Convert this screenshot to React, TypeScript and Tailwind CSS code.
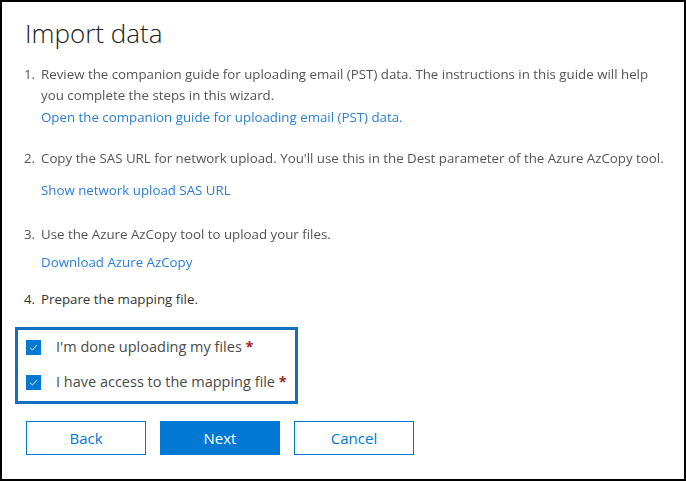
import React from 'react';

const font = { fontFamily: '"Open Sans", "Noto Sans", sans-serif' };

function Check() {
  return (
    <span className="flex h-[15px] w-[15px] shrink-0 items-center justify-center bg-[#0078d4]">
      <svg width="11" height="11" viewBox="0 0 11 11" fill="none">
        <polyline points="2,5.8 4.4,8 9,3" stroke="#fff" strokeWidth="0.9" />
      </svg>
    </span>
  );
}

export default function App() {
  return (
    <div className="h-[481px] w-[686px] border-2 border-black bg-white pl-[13px] font-['Open_Sans',sans-serif]">
      <h1 className="ml-[10px] mt-[13px] text-[26px] font-light leading-[36px] text-[#222]">Import data</h1>

      <div className="ml-[9px] mt-[13px] w-[650px] text-[13.3px] leading-[21px] text-[#555] blur-[0.5px]">
        <div className="flex">
          <span className="w-[17px] shrink-0">1.</span>
          <div className="w-[630px]">
            <p>Review the companion guide for uploading email (PST) data. The instructions in this guide will help you complete the steps in this wizard.</p>
            <p className="mt-px text-[#2b7fd4]">Open the companion guide for uploading email (PST) data.</p>
          </div>
        </div>
        <div className="mt-[20px] flex">
          <span className="w-[17px] shrink-0">2.</span>
          <div>
            <p>Copy the SAS URL for network upload. You'll use this in the Dest parameter of the Azure AzCopy tool.</p>
            <p className="mt-[11px] text-[#2b7fd4]">Show network upload SAS URL</p>
          </div>
        </div>
        <div className="mt-[23px] flex">
          <span className="w-[17px] shrink-0">3.</span>
          <div>
            <p>Use the Azure AzCopy tool to upload your files.</p>
            <p className="mt-[7px] text-[#2b7fd4]">Download Azure AzCopy</p>
          </div>
        </div>
      </div>

      <div className="ml-[9px] mt-[16px] flex text-[13.3px] leading-[21px] text-[#333]">
        <span className="w-[17px] shrink-0">4.</span>
        <p>Prepare the mapping file.</p>
      </div>

      <div className="mt-[17px] w-[283px] border-[3px] border-[#1570c4] pb-[6px] pl-[8px] pt-[4px] text-[14.5px] text-[#4a4a4a]" style={font}>
        <label className="flex h-[26px] items-center gap-[15px]">
          <Check />
          <span>I'm done uploading my files <span className="font-bold text-[#a4262c]">*</span></span>
        </label>
        <label className="mt-[9px] flex h-[26px] items-center gap-[15px]">
          <Check />
          <span>I have access to the mapping file <span className="font-bold text-[#a4262c]">*</span></span>
        </label>
      </div>

      <div className="ml-[11px] mt-[17px] flex gap-[14px] text-[15px]">
        <button className="h-[34px] w-[120px] border border-[#0078d4] bg-white text-[#0078d4]">Back</button>
        <button className="h-[34px] w-[120px] border border-[#0078d4] bg-[#0078d4] text-white">Next</button>
        <button className="h-[34px] w-[120px] border border-[#0078d4] bg-white text-[#0078d4]">Cancel</button>
      </div>
    </div>
  );
}
